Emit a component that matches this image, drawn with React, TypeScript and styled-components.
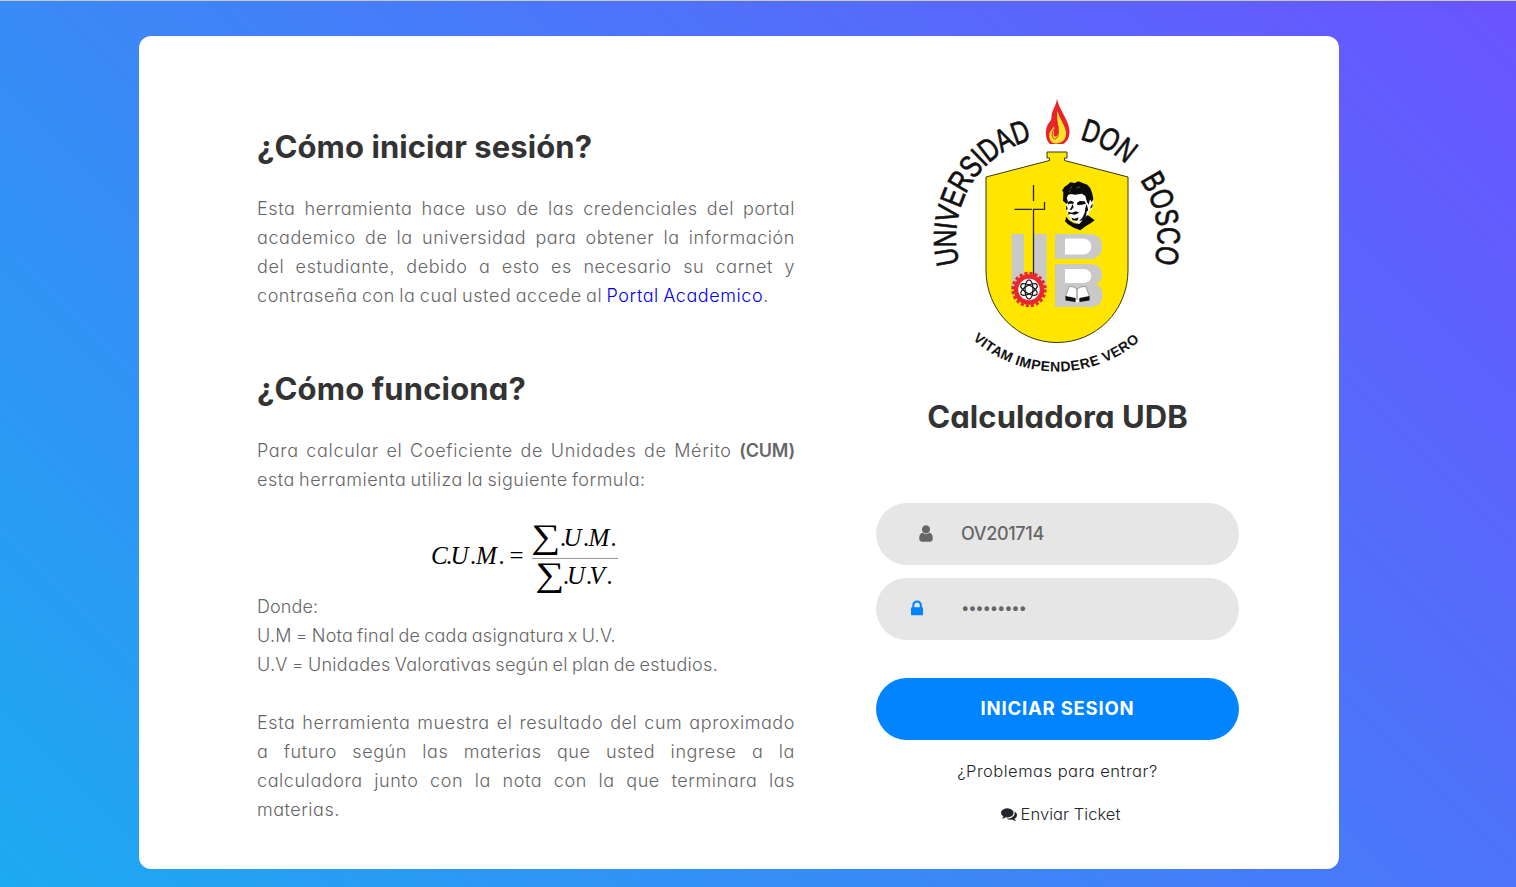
import React from "react";
import styled, { createGlobalStyle } from "styled-components";

const GlobalStyle = createGlobalStyle`
  *, *::before, *::after { box-sizing: border-box; }
  body {
    margin: 0;
    font-family: Inter, "Open Sans", sans-serif;
    font-feature-settings: "cv11" 1, "ss03" 1;
  }
`;

const Page = styled.main`
  display: flex;
  justify-content: center;
  align-items: flex-start;
  width: 1516px;
  height: 887px;
  padding: 35px 38px 0 0;
  border-top: 1px solid #c9c9cb;
  background: linear-gradient(-135deg, #6a54ff, #1caaf1);
  overflow: hidden;
`;

const Card = styled.section`
  display: flex;
  align-items: flex-start;
  justify-content: space-between;
  width: 1200px;
  height: 833px;
  padding: 0 100px 0 118px;
  border-radius: 12px;
  background: #fff;
`;

const Info = styled.div`
  width: 538px;
  padding-top: 88px;
`;

const Heading = styled.h2<{ $ls?: number; $top?: number }>`
  margin: ${(p) => p.$top ?? 0}px 0 0;
  font-size: 31px;
  font-weight: 700;
  line-height: 45px;
  color: #333;
  white-space: nowrap;
  letter-spacing: ${(p) => p.$ls ?? 0}px;
`;

const Paragraph = styled.p<{ $top?: number }>`
  margin: ${(p) => p.$top ?? 0}px 0 0;
  font-size: 18px;
  font-weight: 300;
  line-height: 29px;
  color: #666;
`;

const Line = styled.span<{ $justify?: boolean; $ls?: number }>`
  display: block;
  white-space: nowrap;
  text-align-last: ${(p) => (p.$justify ? "justify" : "left")};
  letter-spacing: ${(p) => p.$ls ?? 0.57}px;
  word-spacing: -1.3px;
`;

const Strong = styled.b`
  font-weight: 600;
  letter-spacing: -0.2px;
`;

const PortalLink = styled.a`
  color: #0000ee;
  text-decoration: none;
`;

const Formula = styled.svg`
  display: block;
  margin: 26px 0 0 163px;
  overflow: visible;
`;

const Login = styled.form`
  display: flex;
  flex-direction: column;
  align-items: center;
  width: 363px;
  padding-top: 62px;
`;

const Crest = styled.svg`
  display: block;
  margin-bottom: 20px;
  overflow: visible;
`;

const Field = styled.div<{ $active?: boolean }>`
  display: flex;
  align-items: center;
  width: 100%;
  height: 62px;
  margin-top: ${(p) => (p.$active ? 13 : 64)}px;
  padding-left: ${(p) => (p.$active ? 35 : 43)}px;
  padding-bottom: ${(p) => (p.$active ? 2 : 1)}px;
  border-radius: 31px;
  background: #e6e6e6;
  color: ${(p) => (p.$active ? "#0084ff" : "#666")};
`;

const FieldText = styled.span<{ $inset: number; $ls: number; $size?: number; $lift?: number }>`
  margin-left: ${(p) => p.$inset}px;
  padding-bottom: ${(p) => p.$lift ?? 0}px;
  font-size: ${(p) => p.$size ?? 18}px;
  font-weight: 500;
  line-height: 27px;
  letter-spacing: ${(p) => p.$ls}px;
  color: #666;
`;

const Submit = styled.button`
  width: 100%;
  height: 62px;
  margin-top: 38px;
  padding: 0 0 2px;
  border: 0;
  border-radius: 31px;
  background: #0084ff;
  color: #fff;
  font: 700 18.5px/27px Inter, sans-serif;
  letter-spacing: 0.8px;
`;

const Help = styled.p<{ $top: number; $ls: number; $shift?: number }>`
  display: flex;
  align-items: center;
  gap: 4px;
  margin: ${(p) => p.$top}px 0 0;
  padding-left: ${(p) => p.$shift ?? 0}px;
  font-size: 16.5px;
  font-weight: 300;
  line-height: 24px;
  letter-spacing: ${(p) => p.$ls}px;
  color: #212529;
`;

const advances: Record<string, number> = {
  " ": 0.278, A: 0.667, B: 0.667, C: 0.722, D: 0.722, E: 0.667, I: 0.278, M: 0.833,
  N: 0.722, O: 0.778, P: 0.667, R: 0.722, S: 0.667, T: 0.611, U: 0.722, V: 0.667,
};

type ArcProps = {
  text: string;
  cy: number;
  radius: number;
  from: number;
  to: number;
  size: number;
  squeeze: number;
  bold?: boolean;
  below?: boolean;
};

/* Letters spread along a circle around x = 1057; angles are clockwise degrees from the top or, below, counted left to right from the bottom. */
function ArcText({ text, cy, radius, from, to, size, squeeze, bold, below }: ArcProps) {
  const chars = text.split("");
  const total = chars.reduce((sum, c) => sum + advances[c], 0);
  let used = 0;
  return (
    <g fontFamily="Liberation Sans, Arial, sans-serif" fontSize={size} fontWeight={bold ? 700 : 400} textAnchor="middle" fill="#111">
      {chars.map((c, i) => {
        const angle = from + ((used + advances[c] / 2) / total) * (to - from);
        used += advances[c];
        return (
          <text
            key={i}
            transform={`translate(1057 ${cy}) rotate(${below ? -angle : angle}) translate(0 ${below ? radius : -radius}) scale(${squeeze} 1)`}
            stroke={bold ? "none" : "#111"}
            strokeWidth={0.7}
          >
            {c}
          </text>
        );
      })}
    </g>
  );
}

function UniversityCrest() {
  return (
    <Crest width="253" height="276" viewBox="931 98 253 276">
      <ArcText text="UNIVERSIDAD" cy={238} radius={101} from={-104.5} to={-14.5} size={32} squeeze={0.76} />
      <ArcText text="DON" cy={238} radius={101} from={13} to={43} size={32} squeeze={0.76} />
      <ArcText text="BOSCO" cy={237} radius={100.5} from={55.5} to={105} size={32} squeeze={0.76} />
      <ArcText text="VITAM IMPENDERE VERO" cy={245} radius={126.5} from={-42} to={41} size={14} squeeze={1} bold below />

      <path d="M1057 98.5C1058 108 1069 120 1069.500 131C1069.500 138 1067 142 1063 144H1050C1046 140 1045 134 1046.500 128C1048 122 1051 122 1051.500 118C1051 111 1056 107 1057 98.500Z" fill="#e8232a" />
      <path d="M1057.500 111C1060 120 1066.500 127 1066 134C1066 140 1061 143.500 1056 143.500C1050 143.500 1048.500 137 1049.500 133C1050.500 130 1053 129 1054 126C1055 130 1053 133 1054 136C1057 138 1058.500 134 1058 130C1059 124 1056 119 1057.500 111Z" fill="#ffe32b" />
      <path d="M1054 129C1050.500 134 1052.500 140 1055.500 139C1060 136 1057.500 130 1058.500 126" fill="none" stroke="#e8232a" strokeWidth="1" />

      <path d="M1047 152H1067V158H1064.500V160.500L1128 177V270C1128 311 1096 342.500 1057 342.500S986 311 986 270V177L1049.500 160.500V158H1047Z" fill="#ffe600" stroke="#3a3710" strokeWidth="1" />

      <path d="M1011.500 234H1024V289H1011.500ZM1034 234H1046.500V289H1034Z" fill="#c9c9c9" />
      <path d="M1055 234H1089C1098 234 1102 239 1102 246C1102 254 1098 259 1089 259H1055Z" fill="#c9c9c9" />
      <path d="M1055 264H1090C1098 264 1102 268 1102 275C1102 281 1098 283 1096 284C1100 286 1102.500 289 1102.500 295C1102.500 302 1099 307 1090 307H1055Z" fill="#c9c9c9" />
      <path d="M1065 238.500H1083C1094 238.500 1094 254.500 1083 254.500H1065ZM1065 269H1083C1094 269 1094 283 1083 283H1065Z" fill="#fff" />

      <path d="M1033.500 185V201M1014.500 209.300H1032M1044.500 202V209.300H1033.500V275" fill="none" stroke="#282708" strokeWidth="1.300" />

      <circle cx="1029" cy="289.500" r="16.300" fill="none" stroke="#e8262d" strokeWidth="2.800" strokeDasharray="3.120 2" />
      <circle cx="1029" cy="289.500" r="13" fill="#fff" stroke="#e8262d" strokeWidth="4.500" />
      <g fill="none" stroke="#111" strokeWidth="1.200">
        <ellipse cx="1029" cy="289.500" rx="4" ry="9.700" />
        <ellipse cx="1029" cy="289.500" rx="4" ry="9.300" transform="rotate(60 1029 289.500)" />
        <ellipse cx="1029" cy="289.500" rx="4" ry="9.300" transform="rotate(-60 1029 289.500)" />
      </g>

      <path d="M1065.500 297L1069 286.500Q1074 286 1077 289Q1081 286 1086 286.500L1089.500 297L1077.500 300Z" fill="#fff" stroke="#555" strokeWidth="0.500" />
      <path d="M1077 289V299" stroke="#333" strokeWidth="0.700" />
      <path d="M1065.500 296L1075.500 298V302L1065.500 300.500ZM1079.500 298L1089.500 296V300.500L1079.500 302Z" fill="#111" />
      <circle cx="1077.500" cy="301" r="1.600" fill="#fff" />

      <g transform="translate(1000 160) scale(0.3333)" fill="#0b0b0b">
        <path d="M200 104L265 96L273 120L281 124L277 145L268 153L264 168L239 192L212 180L205 165L199 145Z" fill="#fff" />
        <path d="M189 122L190 96L186 92L193 81L203 74L211 67L224 69L235 64L248 69L262 74L271 85L277 101L280 117L275 127L270 118L266 134L261 126L256 108L246 101L225 104L213 102L205 104L200 113L204 125L200 132L193 126Z" />
        <path d="M202 127L212 122L222 126L220 131L209 131L205 134ZM231 129L239 123L254 124L258 131L246 134L232 135Z" />
        <path d="M217 131L221 141L215 149L208 150L214 142ZM205 155L216 158L228 154L238 158L224 164L210 161L205 165Z" />
        <path d="M260 132L265 151L260 155L258 169L249 180L237 184L247 173L254 158L256 145ZM214 173L224 176L236 172L232 182L218 181Z" />
        <path d="M199 170L207 181L222 190L238 192L250 177L263 165L270 170L284 181L273 189L257 199L241 211L221 203L204 193L195 184Z" />
        <path d="M273 137L278 130L277 141L270 147ZM199 136L203 145L201 151L198 147Z" />
        <path d="M209 86L217 80M230 84L240 80M207 95L213 91" stroke="#bbb" strokeWidth="1.200" />
      </g>
    </Crest>
  );
}

function CumFormula() {
  return (
    <Formula width="202" height="76" viewBox="420 520 202 76" fill="#000" fontFamily="Liberation Serif, Times New Roman, serif">
      <g fontSize="25" fontStyle="italic">
        <text x="431 446.500 450.500 470.500 476 499" y="564">C.U.M.</text>
        <text x="560.500 563.500 583.500 588.500 611" y="546">.U.M.</text>
        <text x="563.500 567 586.500 589.500 607" y="584">.U.V.</text>
      </g>
      <text x="509.500" y="564" fontSize="25">=</text>
      <text x="531" y="548" fontSize="34" textLength="29" lengthAdjust="spacingAndGlyphs">∑</text>
      <text x="535" y="586" fontSize="34" textLength="29" lengthAdjust="spacingAndGlyphs">∑</text>
      <path d="M532 558.500H618" stroke="#999" strokeWidth="1" />
    </Formula>
  );
}

const UserIcon = () => (
  <svg width="14" height="19" viewBox="0 0 1280 1792" fill="currentColor">
    <path d="M1280 1399q0 109-62.500 187t-150.500 78h-854q-88 0-150.500-78t-62.500-187q0-85 8.500-160.500t31.500-152 58.500-131 94-89 134.500-34.500q131 128 313 128t313-128q76 0 134.500 34.500t94 89 58.500 131 31.500 152 8.500 160.500zm-256-887q0 159-112.500 271.500t-271.500 112.500-271.500-112.500-112.500-271.500 112.500-271.500 271.500-112.500 271.500 112.500 112.500 271.500z" />
  </svg>
);

const LockIcon = () => (
  <svg width="12.200" height="19" viewBox="0 0 1152 1792" fill="currentColor">
    <path d="M320 768h512v-192q0-106-75-181t-181-75-181 75-75 181v192zm832 96v576q0 40-28 68t-68 28h-960q-40 0-68-28t-28-68v-576q0-40 28-68t68-28h32v-192q0-184 132-316t316-132 316 132 132 316v192h32q40 0 68 28t28 68z" />
  </svg>
);

const CommentsIcon = () => (
  <svg width="16" height="16" viewBox="0 0 1792 1792" fill="currentColor">
    <path d="M1408 768q0 139-94 257t-256.500 186.500-353.500 68.500q-86 0-176-16-124 88-278 128-36 9-86 16h-3q-11 0-20.500-8t-11.500-21q-1-3-1-6.500t.5-6.500 2-6l2.500-5t3.500-5.500 4-5 4.500-5 4-4.500q5-6 23-25t26-29.500 22.500-29 25-38.500 20.500-44q-124-72-195-177t-71-224q0-139 94-257t256.500-186.500 353.500-68.500 353.500 68.500 256.500 186.500 94 257zm384 256q0 120-71 224.500t-195 176.500q10 24 20.500 44t25 38.500 22.500 29 26 29.500 23 25q1 1 4 4.500t4.500 5 4 5 3.500 5.500l2.500 5t2 6 .5 6.500-1 6.500q-3 14-13 22t-22 7q-50-7-86-16-154-40-278-128-90 16-176 16-271 0-472-132 58 4 88 4 161 0 309-45t264-129q125-92 192-212t67-254q0-77-23-152 129 71 204 178t75 230z" />
  </svg>
);

export default function App() {
  return (
    <>
      <GlobalStyle />
      <Page>
        <Card>
          <Info>
            <Heading $ls={0.08}>¿Cómo iniciar sesión?</Heading>
            <Paragraph $top={25}>
              <Line $justify>Esta herramienta hace uso de las credenciales del portal</Line>
              <Line $justify>academico de la universidad para obtener la información</Line>
              <Line $justify>del estudiante, debido a esto es necesario su carnet y</Line>
              <Line>
                contraseña con la cual usted accede al <PortalLink>Portal Academico</PortalLink>.
              </Line>
            </Paragraph>
            <Heading $top={56} $ls={0.15}>¿Cómo funciona?</Heading>
            <Paragraph $top={25}>
              <Line $justify $ls={0.66}>
                Para calcular el Coeficiente de Unidades de Mérito <Strong>(CUM)</Strong>
              </Line>
              <Line $ls={0.5}>esta herramienta utiliza la siguiente formula:</Line>
            </Paragraph>
            <CumFormula />
            <Paragraph $top={-4}>
              <Line $ls={0.1}>Donde:</Line>
              <Line $ls={0.25}>U.M = Nota final de cada asignatura x U.V.</Line>
              <Line $ls={0.3}>U.V = Unidades Valorativas según el plan de estudios.</Line>
            </Paragraph>
            <Paragraph $top={29}>
              <Line $justify>Esta herramienta muestra el resultado del cum aproximado</Line>
              <Line $justify>a futuro según las materias que usted ingrese a la</Line>
              <Line $justify>calculadora junto con la nota con la que terminara las</Line>
              <Line $ls={0.5}>materias.</Line>
            </Paragraph>
          </Info>
          <Login>
            <UniversityCrest />
            <Heading $ls={0.1}>Calculadora UDB</Heading>
            <Field>
              <UserIcon />
              <FieldText $inset={28} $ls={-0.35}>OV201714</FieldText>
            </Field>
            <Field $active>
              <LockIcon />
              <FieldText $inset={38} $ls={-0.8} $size={15} $lift={1}>•••••••••</FieldText>
            </Field>
            <Submit type="button">INICIAR SESION</Submit>
            <Help $top={19} $ls={0.5}>¿Problemas para entrar?</Help>
            <Help $top={19} $ls={0.05} $shift={6}>
              <CommentsIcon />
              Enviar Ticket
            </Help>
          </Login>
        </Card>
      </Page>
    </>
  );
}
